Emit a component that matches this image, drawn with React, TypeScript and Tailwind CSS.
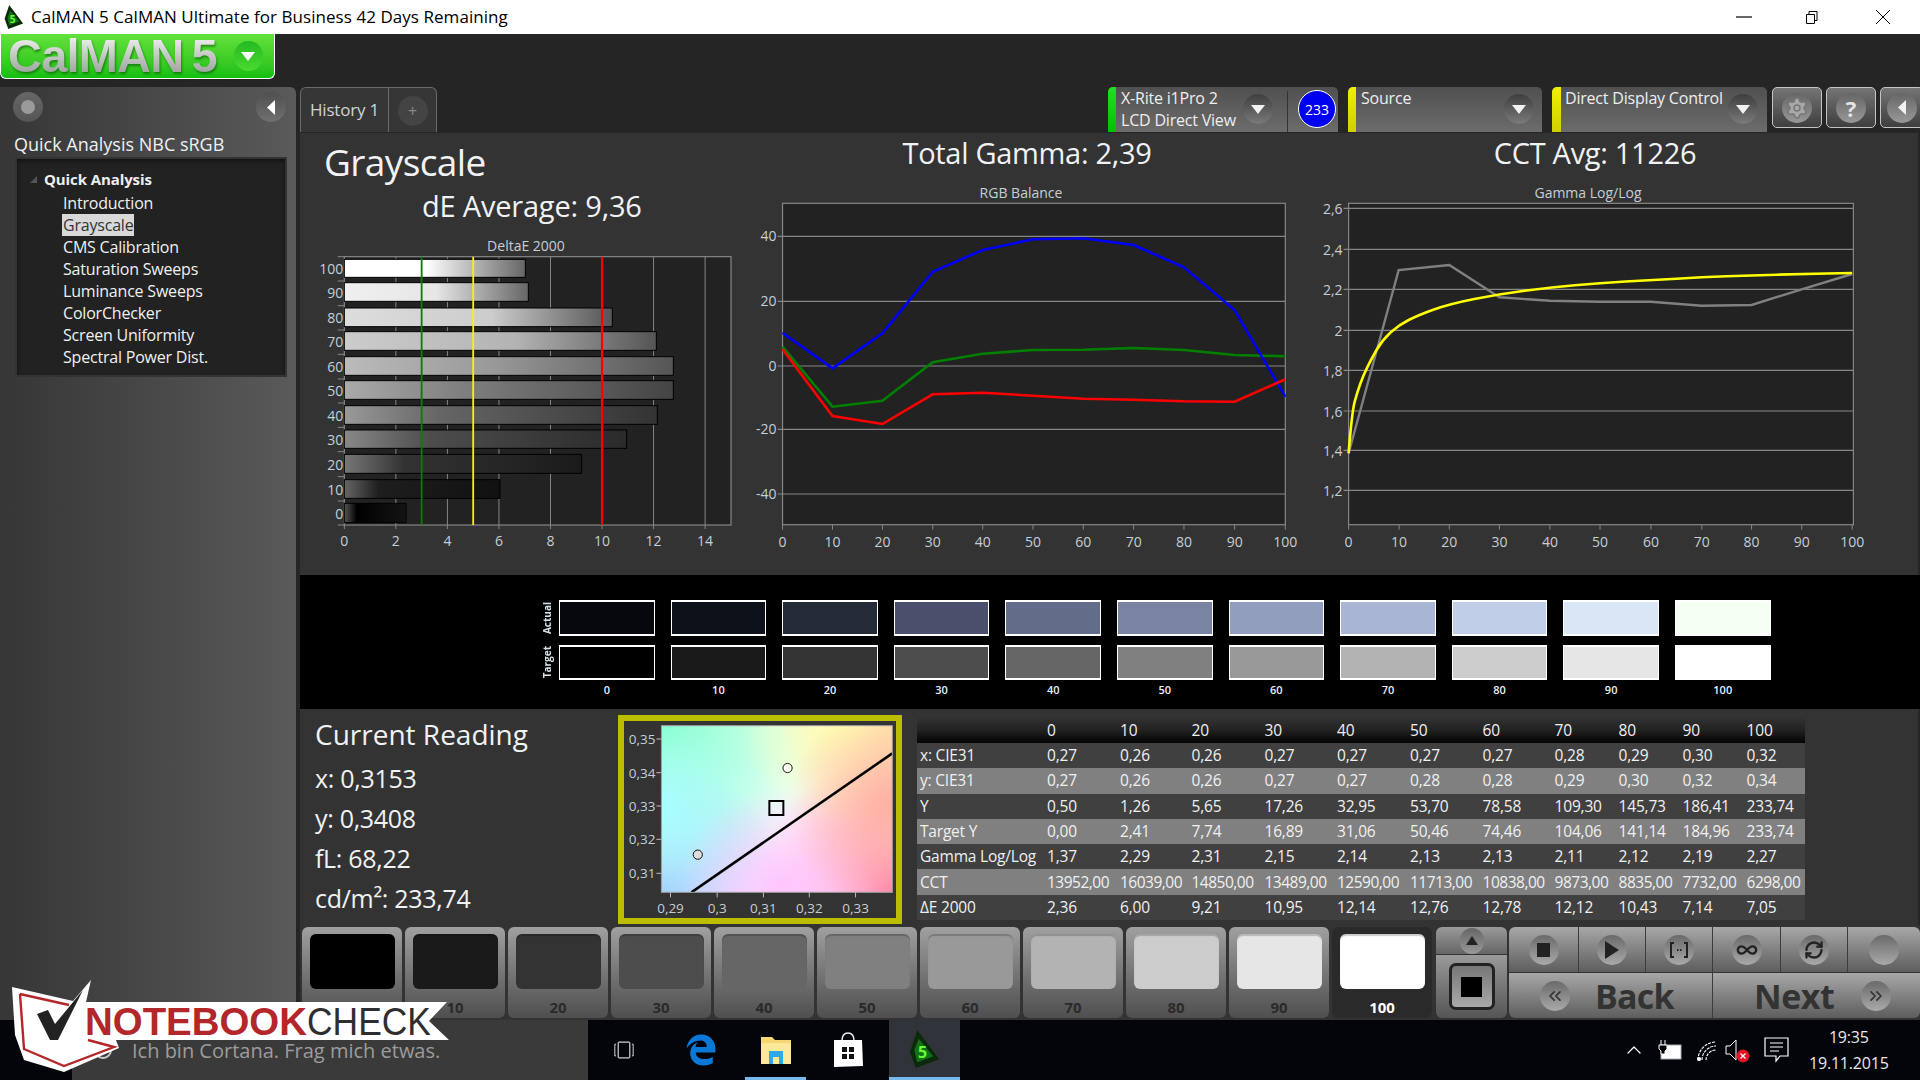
import React from "react";
import { Settings, Infinity as InfinityIcon, RefreshCw, ChevronsLeft, ChevronsRight, ChevronUp } from "lucide-react";
import { FaEdgeLegacy } from "react-icons/fa6";

const tree = ["Introduction", "Grayscale", "CMS Calibration", "Saturation Sweeps", "Luminance Sweeps", "ColorChecker", "Screen Uniformity", "Spectral Power Dist."];
const actual = ["#06080e", "#0d111a", "#232a38", "#4a4f6b", "#636c88", "#7a83a1", "#919ebd", "#a9b6d3", "#c0cde6", "#dae6f5", "#f5fff3"];
const target = ["#000000", "#1a1a1a", "#333333", "#4d4d4d", "#666666", "#808080", "#999999", "#b3b3b3", "#cccccc", "#e6e6e6", "#ffffff"];
const levels = ["0", "10", "20", "30", "40", "50", "60", "70", "80", "90", "100"];

const rows: [string, string[]][] = [
  ["x: CIE31", ["0,27", "0,26", "0,26", "0,27", "0,27", "0,27", "0,27", "0,28", "0,29", "0,30", "0,32"]],
  ["y: CIE31", ["0,27", "0,26", "0,26", "0,27", "0,27", "0,28", "0,28", "0,29", "0,30", "0,32", "0,34"]],
  ["Y", ["0,50", "1,26", "5,65", "17,26", "32,95", "53,70", "78,58", "109,30", "145,73", "186,41", "233,74"]],
  ["Target Y", ["0,00", "2,41", "7,74", "16,89", "31,06", "50,46", "74,46", "104,06", "141,14", "184,96", "233,74"]],
  ["Gamma Log/Log", ["1,37", "2,29", "2,31", "2,15", "2,14", "2,13", "2,13", "2,11", "2,12", "2,19", "2,27"]],
  ["CCT", ["13952,00", "16039,00", "14850,00", "13489,00", "12590,00", "11713,00", "10838,00", "9873,00", "8835,00", "7732,00", "6298,00"]],
  ["ΔE 2000", ["2,36", "6,00", "9,21", "10,95", "12,14", "12,76", "12,78", "12,12", "10,43", "7,14", "7,05"]],
];

const LABEL = "#c6ced6";
const GRID = "#868686";

function DeltaChart() {
  const zx = (X: number) => 300 + X / 3;
  const zy = (Y: number) => 230 + Y / 3;
  const L = zx(133), R = zx(1293), T = zy(80), B = zy(885);
  const unit = 25.77;
  const bars: [string, number, number, number, string, string, string, number][] = [
    ["100", 88, 142, 676, "#ffffff", "#ffffff", "#666666", 0.45],
    ["90", 158, 214, 685, "#f0f0f0", "#e6e6e6", "#666666", 0.5],
    ["80", 234, 290, 937, "#dddddd", "#cccccc", "#555555", 0.55],
    ["70", 305, 361, 1069, "#cccccc", "#b3b3b3", "#555555", 0.55],
    ["60", 380, 436, 1120, "#bbbbbb", "#999999", "#555555", 0.45],
    ["50", 452, 508, 1120, "#aaaaaa", "#808080", "#444444", 0.35],
    ["40", 527, 583, 1072, "#999999", "#666666", "#333333", 0.3],
    ["30", 600, 655, 980, "#888888", "#4d4d4d", "#2a2a2a", 0.3],
    ["20", 673, 730, 845, "#777777", "#333333", "#1a1a1a", 0.25],
    ["10", 749, 805, 600, "#666666", "#1e1e1e", "#111111", 0.22],
    ["0", 820, 878, 318, "#555555", "#000000", "#141414", 0.2],
  ];
  const ticks = [80, 153, 227, 300, 373, 447, 519, 592, 665, 740, 813, 885];
  return (
    <svg width={445} height={325} viewBox="300 250 445 325" className="block">
      <defs>
        {bars.map((b) => (
          <linearGradient key={b[0]} id={`bar${b[0]}`} x1="0" x2="1" y1="0" y2="0">
            <stop offset="0" stopColor={b[4]} />
            <stop offset={b[7]} stopColor={b[5]} />
            <stop offset="1" stopColor={b[6]} />
          </linearGradient>
        ))}
      </defs>
      <rect x={L} y={T} width={R - L} height={B - T} fill="#222222" stroke={GRID} strokeWidth="1.2" />
      {[2, 4, 6, 8, 10, 12, 14].map((v) => (
        <line key={v} x1={L + v * unit} x2={L + v * unit} y1={T} y2={B} stroke={GRID} />
      ))}
      {ticks.map((t) => (
        <line key={t} x1={zx(113)} x2={L} y1={zy(t)} y2={zy(t)} stroke={GRID} />
      ))}
      {bars.map((b) => (
        <rect key={b[0]} x={L} y={zy(b[1])} width={zx(b[3]) - L} height={(b[2] - b[1]) / 3} fill={`url(#bar${b[0]})`} stroke="#000" strokeWidth="1" />
      ))}
      <line x1={L + 3 * unit} x2={L + 3 * unit} y1={T} y2={B} stroke="#0c7a0c" strokeWidth="1.8" />
      <line x1={L + 5 * unit} x2={L + 5 * unit} y1={T} y2={B} stroke="#f5f500" strokeWidth="1.8" />
      <line x1={L + 10 * unit} x2={L + 10 * unit} y1={T} y2={B} stroke="#ff0000" strokeWidth="2.2" />
      {bars.map((b) => (
        <text key={b[0]} x={L - 1} y={zy((b[1] + b[2]) / 2) + 6} textAnchor="end" fontSize="14" fill={LABEL}>{b[0]}</text>
      ))}
      {[0, 2, 4, 6, 8, 10, 12, 14].map((v) => (
        <g key={v}>
          <line x1={L + v * unit} x2={L + v * unit} y1={B} y2={B + 4} stroke={GRID} />
          <text x={L + v * unit} y={B + 21} textAnchor="middle" fontSize="14" fill={LABEL}>{v}</text>
        </g>
      ))}
    </svg>
  );
}

function RgbChart() {
  const zx = (X: number) => 740 + X / 2.703;
  const zy = (Y: number) => 170 + Y / 3;
  const L = zx(115), R = zx(1474), T = zy(100), B = zy(1064);
  const xs = [115, 250, 385, 521, 656, 792, 928, 1064, 1200, 1337, 1474];
  const path = (ys: number[]) => ys.map((y, i) => `${zx(xs[i]).toFixed(1)},${zy(y).toFixed(1)}`).join(" ");
  const yLabels: [string, number][] = [["40", 199], ["20", 394], ["0", 588], ["-20", 778], ["-40", 972]];
  return (
    <svg width={555} height={375} viewBox="745 200 555 375" className="block">
      <rect x={L} y={T} width={R - L} height={B - T} fill="#222222" stroke={GRID} strokeWidth="1.2" />
      {yLabels.map(([l, y]) => (
        <g key={l}>
          <line x1={L - 5} x2={R} y1={zy(y)} y2={zy(y)} stroke={GRID} strokeWidth="1.1" />
          <text x={L - 6} y={zy(y) + 5} textAnchor="end" fontSize="14" fill={LABEL}>{l}</text>
        </g>
      ))}
      {xs.map((x, i) => (
        <g key={x}>
          <line x1={zx(x)} x2={zx(x)} y1={B} y2={B + 5} stroke={GRID} />
          <text x={zx(x)} y={B + 22} textAnchor="middle" fontSize="14" fill={LABEL}>{i * 10}</text>
        </g>
      ))}
      <polyline fill="none" stroke="#008000" strokeWidth="2.6" points={path([530, 710, 692, 577, 551, 540, 539, 534, 540, 555, 559])} />
      <polyline fill="none" stroke="#0000ff" strokeWidth="2.6" points={path([488, 595, 490, 305, 240, 208, 205, 225, 292, 420, 680])} />
      <polyline fill="none" stroke="#ff0000" strokeWidth="2.6" points={path([538, 738, 762, 673, 668, 677, 686, 689, 694, 695, 628])} />
    </svg>
  );
}

function GammaChart() {
  const zx = (X: number) => 1300 + X / 2.613;
  const zy = (Y: number) => 170 + Y / 3;
  const L = zx(127), R = zx(1446), T = zy(100), B = zy(1064);
  const xs = [127, 259, 390, 521, 653, 784, 917, 1050, 1180, 1311, 1443];
  const yl: [string, number][] = [["2,6", 115], ["2,4", 238], ["2,2", 358], ["2", 481], ["1,8", 601], ["1,6", 723], ["1,4", 841], ["1,2", 961]];
  const pts = (a: number[][]) => a.map(([x, y]) => `${zx(x).toFixed(1)},${zy(y).toFixed(1)}`).join(" ");
  const yellow = [[127, 850], [136, 725], [150, 665], [165, 617], [185, 570], [215, 510], [258, 465], [310, 435], [390, 402], [521, 372], [653, 352], [784, 339], [917, 330], [1050, 322], [1180, 316], [1311, 312], [1443, 309]];
  const smooth = yellow.reduce((d, [x, y], i) => {
    if (i === 0) return `M${zx(x).toFixed(1)} ${zy(y).toFixed(1)}`;
    if (i === yellow.length - 1) return `${d} L${zx(x).toFixed(1)} ${zy(y).toFixed(1)}`;
    const mx = (x + yellow[i + 1][0]) / 2;
    const my = (y + yellow[i + 1][1]) / 2;
    return `${d} Q${zx(x).toFixed(1)} ${zy(y).toFixed(1)} ${zx(mx).toFixed(1)} ${zy(my).toFixed(1)}`;
  }, "");
  return (
    <svg width={618} height={375} viewBox="1300 200 618 375" className="block">
      <rect x={L} y={T} width={R - L} height={B - T} fill="#222222" stroke={GRID} strokeWidth="1.2" />
      {yl.map(([l, y]) => (
        <g key={l}>
          <line x1={L - 5} x2={R} y1={zy(y)} y2={zy(y)} stroke={GRID} strokeWidth="1.1" />
          <text x={L - 6} y={zy(y) + 6} textAnchor="end" fontSize="14" fill={LABEL}>{l}</text>
        </g>
      ))}
      {xs.map((x, i) => (
        <g key={x}>
          <line x1={zx(x)} x2={zx(x)} y1={B} y2={B + 5} stroke={GRID} />
          <text x={zx(x)} y={B + 22} textAnchor="middle" fontSize="14" fill={LABEL}>{i * 10}</text>
        </g>
      ))}
      <polyline fill="none" stroke="#808080" strokeWidth="2.4" points={pts([[127, 850], [258, 300], [390, 285], [521, 382], [653, 392], [784, 395], [917, 395], [1050, 407], [1180, 405], [1311, 358], [1443, 312]])} />
      <path fill="none" stroke="#ffff00" strokeWidth="2.6" d={smooth} />
    </svg>
  );
}

function CieChart() {
  const zx = (X: number) => 300 + X / 2.529;
  const zy = (Y: number) => 705 + Y / 3;
  const L = zx(914), R = zx(1498), T = zy(62), B = zy(562);
  const blobs: [string, number, number, string, number][] = [
    ["a", L, T, "#7dffc0", 175],
    ["b", R, T, "#ffd4a4", 110],
    ["c", L, B, "#a0c0ff", 130],
    ["d", R, B, "#ff80ac", 135],
    ["e", L, (T + B) / 2, "#a8ffff", 115],
    ["f", zx(1370), T, "#ffffb0", 100],
    ["g", zx(1220), B, "#ffc4ff", 105],
    ["h", R, zy(300), "#ffb0a0", 105],
  ];
  return (
    <svg width={272} height={197} viewBox="624 721 272 197" className="block">
      <defs>
        <clipPath id="cieclip"><rect x={L} y={T} width={R - L} height={B - T} /></clipPath>
        {blobs.map(([id, x, y, c, r]) => (
          <radialGradient key={id} id={`cie${id}`} gradientUnits="userSpaceOnUse" cx={x} cy={y} r={r}>
            <stop offset="0" stopColor={c} stopOpacity="1" />
            <stop offset="1" stopColor={c} stopOpacity="0" />
          </radialGradient>
        ))}
      </defs>
      <rect x={L} y={T} width={R - L} height={B - T} fill="#ffffff" />
      <g clipPath="url(#cieclip)">
        {blobs.map(([id]) => (
          <rect key={id} x={L} y={T} width={R - L} height={B - T} fill={`url(#cie${id})`} />
        ))}
        <line x1={zx(990)} y1={zy(562)} x2={zx(1498)} y2={zy(145)} stroke="#000" strokeWidth="2.6" />
      </g>
      <rect x={L} y={T} width={R - L} height={B - T} fill="none" stroke="#999" strokeWidth="1" />
      <circle cx={zx(1233)} cy={zy(189)} r="4.6" fill="#fffff0" stroke="#111" strokeWidth="1" />
      <circle cx={zx(1006)} cy={zy(449)} r="4.6" fill="#ddd" stroke="#111" strokeWidth="1" />
      <rect x={zx(1187)} y={zy(288)} width="14" height="14" fill="none" stroke="#000" strokeWidth="2" />
      {([["0,35", 102], ["0,34", 203], ["0,33", 303], ["0,32", 403], ["0,31", 505]] as [string, number][]).map(([l, y]) => (
        <g key={l}>
          <line x1={L - 5} x2={L} y1={zy(y)} y2={zy(y)} stroke="#bbb" />
          <text x={L - 6} y={zy(y) + 5} textAnchor="end" fontSize="13.5" fill={LABEL}>{l}</text>
        </g>
      ))}
      {([["0,29", 937], ["0,3", 1055], ["0,31", 1172], ["0,32", 1288], ["0,33", 1405]] as [string, number][]).map(([l, x]) => (
        <g key={l}>
          <line x1={zx(x)} x2={zx(x)} y1={B} y2={B + 5} stroke="#bbb" />
          <text x={zx(x)} y={B + 21} textAnchor="middle" fontSize="13.5" fill={LABEL}>{l}</text>
        </g>
      ))}
    </svg>
  );
}

function DropCircle() {
  return (
    <div className="w-[30px] h-[30px] rounded-full bg-gradient-to-b from-[#3f3f3f] to-[#7a7a7a] flex items-center justify-center shrink-0">
      <svg width="14" height="9" viewBox="0 0 14 9"><path d="M0 0h14L7 9z" fill="#f2f2f2" /></svg>
    </div>
  );
}

function TopButton({ children, w = "w-[50px]" }: { children: React.ReactNode; w?: string }) {
  return (
    <div className={`${w} h-[41px] rounded-[5px] border border-[#c4c4c4] bg-gradient-to-b from-[#757575] to-[#3f3f3f] flex items-center justify-center shrink-0`}>
      <div className="w-[30px] h-[30px] rounded-full bg-gradient-to-b from-[#666] to-[#999] flex items-center justify-center shrink-0">{children}</div>
    </div>
  );
}

function TransportCell({ children, w }: { children?: React.ReactNode; w: string }) {
  return (
    <div className={`${w} h-full border-r border-[#3c3c3c] flex items-center justify-center shrink-0`}>
      <div className="w-[30px] h-[30px] rounded-full bg-gradient-to-b from-[#6a6a6a] to-[#aaaaaa] flex items-center justify-center">{children}</div>
    </div>
  );
}

function CalmanIcon({ size }: { size: number }) {
  return (
    <svg width={size * 0.82} height={size} viewBox="0 0 20 26">
      <path d="M5 0 L20 20 L4 26 L0 15 Z" fill="#0a2a0a" />
      <path d="M6 6 L16 18 L5 22 L3 14 Z" fill="#12701a" />
      <text x="5.5" y="19" fontSize="11" fontWeight="700" fill="#66ff33">5</text>
    </svg>
  );
}

function Overlay() {
  return (
    <svg width={450} height={100} viewBox="5 978 450 100" className="absolute left-[5px] top-[978px]">
      <path d="M12 987 L73 1001 L91 980 L86 1002 L447 1002 L429 1021 L449 1040 L116 1040 L119 1048 L64 1072 L24 1060 L15 1035 Z" fill="#ffffff" />
      <path d="M20 994 L69 1005 M20 994 L24 1049 L64 1066 L114 1047 L88 1040" fill="none" stroke="#b3262a" strokeWidth="2.4" />
      <path d="M37 1014 L48 1010 L55 1024 L83 990 L58 1040 L50 1040 Z" fill="#222222" />
      <text x="85" y="1035" fontFamily="'Liberation Sans', sans-serif" fontWeight="700" fontSize="38" fill="#b3262a" textLength="222" lengthAdjust="spacingAndGlyphs">NOTEBOOK</text>
      <text x="307" y="1035" fontFamily="'Liberation Sans', sans-serif" fontSize="38" fill="#2e2e2e" textLength="124" lengthAdjust="spacingAndGlyphs">CHECK</text>
    </svg>
  );
}

export default function App() {
  const colTemplate = "grid grid-cols-[130px_73px_71.5px_73px_72.5px_73px_72.6px_72px_64px_64px_64px_59.5px]";
  return (
    <div className="relative w-[1920px] h-[1080px] overflow-hidden flex flex-col bg-[#252525] font-['Open_Sans',sans-serif] text-white">
      {/* title bar */}
      <div className="h-[34px] bg-white flex items-center text-black shrink-0">
        <div className="ml-[4px] w-[27px] flex"><CalmanIcon size={24} /></div>
        <span className="text-[17px] tracking-[0.05px]">CalMAN 5 CalMAN Ultimate for Business 42 Days Remaining</span>
        <div className="ml-auto flex items-center">
          <svg width="16" height="16" viewBox="0 0 16 16" className="mr-[52px]"><path d="M0 8h16" stroke="#000" strokeWidth="1.2" /></svg>
          <svg width="16" height="16" viewBox="0 0 16 16" className="mr-[55px]"><path d="M2.5 5.5h8v9h-8zM5 5.5V2.5h8v9h-2.5" fill="none" stroke="#000" /></svg>
          <svg width="16" height="16" viewBox="0 0 16 16" className="mr-[29px]"><path d="M1 1l14 14M15 1L1 15" stroke="#000" /></svg>
        </div>
      </div>

      {/* logo strip */}
      <div className="h-[53px] shrink-0">
        <div className="w-[275px] h-[45px] rounded-b-[6px] border border-t-0 border-white bg-gradient-to-b from-[#62e23c] to-[#10bf10] flex items-center">
          <span className="ml-[7px] font-['Liberation_Sans',sans-serif] font-bold text-[47px] leading-[44px] tracking-[-0.8px] bg-gradient-to-b from-[#f6f6f6] to-[#939b93] bg-clip-text text-transparent drop-shadow-[1px_2px_1px_rgba(0,60,0,0.5)]">CalMAN</span>
          <span className="ml-[8px] font-['Liberation_Sans',sans-serif] font-bold text-[47px] leading-[44px] bg-gradient-to-b from-[#f6f6f6] to-[#939b93] bg-clip-text text-transparent drop-shadow-[1px_2px_1px_rgba(0,60,0,0.5)]">5</span>
          <div className="ml-[16px] w-[29px] h-[30px] rounded-full bg-gradient-to-b from-[#22b922] to-[#4ada30] flex items-center justify-center shrink-0">
            <svg width="14" height="9" viewBox="0 0 14 9"><path d="M0 0h14L7 9z" fill="#fff" /></svg>
          </div>
        </div>
      </div>

      <div className="flex h-[933px] shrink-0">
        {/* left panel */}
        <div className="w-[296px] mr-[4px] rounded-tr-[6px] bg-gradient-to-r from-[#363636] to-[#5a5a5a] shrink-0">
          <div className="flex justify-between items-center h-[40px] pl-[13px] pr-[10px]">
            <div className="w-[30px] h-[30px] rounded-full bg-gradient-to-b from-[#666] to-[#555] flex items-center justify-center">
              <div className="w-[14px] h-[14px] rounded-full bg-[#9a9a9a]" />
            </div>
            <div className="w-[30px] h-[30px] rounded-full bg-gradient-to-b from-[#505050] to-[#707070] flex items-center justify-center">
              <svg width="8" height="15" viewBox="0 0 8 15"><path d="M8 0v15L0 7.5z" fill="#fff" /></svg>
            </div>
          </div>
          <div className="pl-[14px] mt-[4px] text-[18px] leading-[26px] text-[#eef0f2]">Quick Analysis NBC sRGB</div>
          <div className="ml-[15px] w-[272px] h-[220px] bg-[#222222] border-2 border-[#333] pt-[8px] shadow-[inset_0_2px_4px_#111]">
            <div className="flex items-center h-[25px] pl-[13px]">
              <svg width="7" height="7" viewBox="0 0 7 7"><path d="M7 0v7H0z" fill="#555" /></svg>
              <span className="ml-[7px] text-[15px] font-bold text-[#eeeeee] tracking-[-0.1px]">Quick Analysis</span>
            </div>
            <div className="pl-[45px] text-[16px] leading-[22px] text-[#f0f0f0] tracking-[-0.2px]">
              {tree.map((t) => (
                <div key={t} className="h-[22px]">
                  <span className={t === "Grayscale" ? "inline-block bg-[#d9d9d9] text-[#333] h-[22px] px-[1px]" : "inline-block px-[1px]"}>{t}</span>
                </div>
              ))}
            </div>
          </div>
        </div>

        {/* main column */}
        <div className="w-[1620px] flex flex-col">
          {/* tabs row */}
          <div className="h-[46px] flex shrink-0">
            <div className="w-[137px] h-[45px] rounded-t-[6px] border border-b-0 border-[#6a6a6a] bg-[#363636] flex shrink-0">
              <div className="w-[88px] border-r border-[#6a6a6a] flex items-center justify-center text-[17px] text-[#cfd3d6] tracking-[-0.2px]">History 1</div>
              <div className="flex-1 flex items-center justify-center pt-[2px]">
                <div className="w-[30px] h-[30px] rounded-full bg-[#444] flex items-center justify-center text-[#888] text-[16px] leading-none">+</div>
              </div>
            </div>
            <div className="ml-[671px] w-[230px] h-[45px] rounded-t-[5px] bg-gradient-to-b from-[#505050] to-[#6c6c6c] flex shrink-0">
              <div className="w-[8px] bg-gradient-to-b from-[#20e020] to-[#00c000] rounded-tl-[5px]" />
              <div className="ml-[5px] w-[116px] text-[16px] leading-[22px] text-[#eee] tracking-[-0.2px] whitespace-nowrap">X-Rite i1Pro 2<br />LCD Direct View</div>
              <div className="pt-[7px] ml-[6px]"><DropCircle /></div>
              <div className="ml-[14px] w-px bg-[#333] mt-[4px]" />
              <div className="ml-[10px] mt-[3px] w-[38px] h-[38px] rounded-full bg-[#0000f0] border border-white flex items-center justify-center text-[14px] text-white">233</div>
            </div>
            <div className="ml-[10px] w-[194px] h-[45px] rounded-t-[5px] bg-gradient-to-b from-[#505050] to-[#6c6c6c] flex shrink-0">
              <div className="w-[8px] bg-gradient-to-b from-[#f0f000] to-[#d0d000] rounded-tl-[5px]" />
              <div className="ml-[5px] flex-1 text-[16px] leading-[22px] text-[#eee] tracking-[-0.2px]">Source</div>
              <div className="pt-[7px] mr-[8px]"><DropCircle /></div>
            </div>
            <div className="ml-[10px] w-[215px] h-[45px] rounded-t-[5px] bg-gradient-to-b from-[#505050] to-[#6c6c6c] flex shrink-0">
              <div className="w-[9px] bg-gradient-to-b from-[#f0f000] to-[#d0d000] rounded-tl-[5px]" />
              <div className="ml-[4px] flex-1 text-[16px] leading-[22px] text-[#eee] tracking-[-0.2px] whitespace-nowrap">Direct Display Control</div>
              <div className="pt-[7px] mr-[9px]"><DropCircle /></div>
            </div>
            <div className="ml-[5px] flex gap-[4px] shrink-0">
              <TopButton><Settings size={24} color="#a8a8a8" fill="#a8a8a8" stroke="#777" strokeWidth={1.5} /></TopButton>
              <TopButton><span className="text-[22px] font-bold text-[#e4e4e4] leading-none">?</span></TopButton>
              <TopButton w="w-[44px]"><svg width="8" height="15" viewBox="0 0 8 15"><path d="M8 0v15L0 7.5z" fill="#f2f2f2" /></svg></TopButton>
            </div>
          </div>

          {/* graphs */}
          <div className="h-[442px] w-[1618px] bg-[#333333] flex shrink-0">
            <div className="w-[445px] shrink-0">
              <div className="h-[56px] pl-[24px] flex items-center text-[37px] leading-none text-[#f0f2f4] tracking-[-0.6px]">Grayscale</div>
              <div className="h-[32px] pl-[122px] flex items-center text-[29px] leading-none text-[#f0f2f4] tracking-[-0.2px] whitespace-nowrap">dE Average: 9,36</div>
              <div className="h-[29px] pt-[16px] w-[452px] text-center text-[14px] leading-[17px] text-[#c6ced6] whitespace-nowrap">DeltaE 2000</div>
              <DeltaChart />
            </div>
            <div className="w-[555px] shrink-0">
              <div className="h-[40px] pl-[9px] text-center text-[29px] leading-[40px] text-[#f0f2f4] tracking-[-0.3px]">Total Gamma: 2,39</div>
              <div className="h-[27px] pt-[11px] text-center text-[14px] leading-[17px] text-[#c6ced6] -ml-[3px]">RGB Balance</div>
              <RgbChart />
            </div>
            <div className="w-[618px] shrink-0">
              <div className="h-[40px] text-center text-[29px] leading-[40px] text-[#f0f2f4] tracking-[-0.3px] -ml-[28px]">CCT Avg: 11226</div>
              <div className="h-[27px] pt-[11px] text-center text-[14px] leading-[17px] text-[#c6ced6] -ml-[42px]">Gamma Log/Log</div>
              <GammaChart />
            </div>
          </div>

          {/* swatches */}
          <div className="h-[134px] bg-black shrink-0 flex">
            <div className="w-[259px] flex flex-col shrink-0 items-end pr-[7px] pt-[25px] text-[10px] font-bold leading-none text-[#d8e0e8]">
              <div className="h-[36px] flex items-center"><span className="[writing-mode:vertical-rl] rotate-180">Actual</span></div>
              <div className="h-[9px]" />
              <div className="h-[35px] flex items-center"><span className="[writing-mode:vertical-rl] rotate-180">Target</span></div>
            </div>
            <div className="flex gap-[16px] pt-[25px]">
              {levels.map((l, i) => (
                <div key={l} className="w-[95.6px] flex flex-col">
                  <div className="h-[36px] border border-white border-t-2 border-b-2" style={{ background: actual[i] }} />
                  <div className="h-[9px]" />
                  <div className="h-[35px] border border-white border-t-2 border-b-2" style={{ background: target[i] }} />
                  <div className="text-center text-[11px] font-semibold leading-[20px] text-[#e8f0f8]">{l}</div>
                </div>
              ))}
            </div>
          </div>

          {/* reading + table */}
          <div className="h-[216px] bg-[#333333] w-[1618px] flex shrink-0">
            <div className="w-[318px] pl-[15px] shrink-0 text-[#f0f2f4]">
              <div className="h-[48px] mt-[1px] flex items-center text-[28px] leading-none whitespace-nowrap">Current Reading</div>
              <div className="text-[25px] leading-[40px] tracking-[-0.3px]">
                <div>x: 0,3153</div>
                <div>y: 0,3408</div>
                <div>fL: 68,22</div>
                <div>cd/m²: 233,74</div>
              </div>
            </div>
            <div className="mt-[6px] w-[284px] h-[209px] border-[6px] border-[#bdbd00] bg-[#333] shrink-0">
              <CieChart />
            </div>
            <div className="ml-[15px] mt-[8px] w-[888px] text-[15.5px] text-[#f0f0f0] shrink-0 tracking-[-0.2px]">
              <div className={`${colTemplate} h-[26px] pt-[2px] items-center bg-gradient-to-b from-[#333] via-[#222] to-[#050505]`}>
                <div />
                {levels.map((l) => <div key={l}>{l}</div>)}
              </div>
              {rows.map(([name, vals], ri) => (
                <div key={name} className={`${colTemplate} h-[25.3px] items-center whitespace-nowrap ${ri % 2 === 0 ? "bg-[#404040]" : "bg-[#808080]"}`}>
                  <div className="pl-[3px]">{name}</div>
                  {vals.map((v, i) => <div key={i} className={name === "CCT" ? "tracking-[-0.5px]" : ""}>{v}</div>)}
                </div>
              ))}
            </div>
          </div>

          {/* bottom buttons */}
          <div className="h-[95px] bg-[#333333] pl-[2px] pt-[2px] flex shrink-0">
            <div className="flex gap-[3px]">
              {levels.map((l, i) => {
                const on = l === "100";
                return (
                  <div key={l} className={`w-[100px] h-[91px] rounded-[6px] flex flex-col items-center pt-[7px] ${on ? "bg-[#2a2a2a]" : "bg-gradient-to-b from-[#a0a0a0] to-[#4f4f4f]"}`}>
                    <div className="w-[85px] h-[55px] rounded-[6px] shadow-[inset_0_2px_1px_rgba(0,0,0,0.2)]" style={{ background: target[i] }} />
                    <div className={`mt-[8px] text-[15px] font-bold leading-[20px] ${on ? "text-white" : "text-[#2a2a2a]"}`}>{l}</div>
                  </div>
                );
              })}
            </div>
            <div className="ml-[4px] w-[71px] h-[91px] flex flex-col gap-[1px] shrink-0">
              <div className="h-[27px] rounded-t-[6px] bg-gradient-to-b from-[#9a9a9a] to-[#666] flex items-center justify-center">
                <div className="w-[24px] h-[26px] rounded-full bg-gradient-to-b from-[#666] to-[#999] flex items-center justify-center">
                  <svg width="12" height="9" viewBox="0 0 12 9"><path d="M6 0l6 9H0z" fill="#222" /></svg>
                </div>
              </div>
              <div className="h-[63px] rounded-b-[6px] bg-gradient-to-b from-[#9a9a9a] to-[#555] flex items-center justify-center">
                <div className="w-[46px] h-[47px] rounded-[7px] border-[3px] border-[#222] bg-gradient-to-b from-[#777] to-[#aaa] flex items-center justify-center">
                  <div className="w-[21px] h-[20px] bg-black" />
                </div>
              </div>
            </div>
            <div className="ml-[2px] flex-1 h-[91px] flex flex-col gap-[1px]">
              <div className="h-[45px] rounded-t-[6px] bg-gradient-to-b from-[#a8a8a8] to-[#5e5e5e] flex overflow-hidden">
                <TransportCell w="w-[70px]"><div className="w-[13px] h-[14px] bg-[#222]" /></TransportCell>
                <TransportCell w="w-[67px]"><svg width="14" height="18" viewBox="0 0 14 18"><path d="M0 0l14 9L0 18z" fill="#222" /></svg></TransportCell>
                <TransportCell w="w-[67px]"><svg width="18" height="16" viewBox="0 0 18 16"><path d="M4 1H1v14h3M14 1h3v14h-3" fill="none" stroke="#222" strokeWidth="2" /><path d="M7 8h1.5M10 8h1.5" stroke="#222" strokeWidth="2" /></svg></TransportCell>
                <TransportCell w="w-[68px]"><InfinityIcon size={22} color="#222" strokeWidth={2.6} /></TransportCell>
                <TransportCell w="w-[67px]"><RefreshCw size={20} color="#222" strokeWidth={2.8} /></TransportCell>
                <div className="flex-1 flex items-center justify-center"><div className="w-[30px] h-[30px] rounded-full bg-gradient-to-b from-[#6a6a6a] to-[#aaaaaa]" /></div>
              </div>
              <div className="h-[45px] rounded-b-[6px] bg-gradient-to-b from-[#a8a8a8] to-[#5e5e5e] flex text-[34px] font-bold leading-none text-[#333]">
                <div className="w-[204px] border-r border-[#3c3c3c] flex items-center pl-[31px]">
                  <div className="w-[30px] h-[30px] rounded-full bg-gradient-to-b from-[#6a6a6a] to-[#aaaaaa] flex items-center justify-center"><ChevronsLeft size={20} color="#333" /></div>
                  <span className="ml-[25px] tracking-[-0.8px]">Back</span>
                </div>
                <div className="flex-1 flex items-center pl-[41px]">
                  <span className="tracking-[-0.5px]">Next</span>
                  <div className="ml-[27px] w-[30px] h-[30px] rounded-full bg-gradient-to-b from-[#6a6a6a] to-[#aaaaaa] flex items-center justify-center"><ChevronsRight size={20} color="#333" /></div>
                </div>
              </div>
            </div>
          </div>
        </div>
      </div>

      {/* taskbar */}
      <div className="h-[60px] flex bg-[#03050a] shrink-0">
        <div className="w-[72px] shrink-0" />
        <div className="w-[516px] bg-[#3a3a3a] flex items-center shrink-0">
          <div className="ml-[22px] w-[18px] h-[18px] rounded-full border-2 border-[#ccc]" />
          <span className="ml-[20px] mt-[1px] text-[20px] text-[#9c9c9c] whitespace-nowrap">Ich bin Cortana. Frag mich etwas.</span>
        </div>
        <div className="w-[26px] shrink-0" />
        <div className="w-[20px] flex items-center shrink-0">
          <svg width="24" height="20" viewBox="0 0 24 20"><rect x="5" y="0.5" width="14" height="19" rx="1" fill="none" stroke="#fff" strokeWidth="1.2" /><path d="M2.5 3H1v14h1.5M21.5 3H23v14h-1.5" fill="none" stroke="#fff" /></svg>
        </div>
        <div className="ml-[38px] w-[58px] flex items-center justify-center shrink-0"><FaEdgeLegacy size={32} color="#0a78d7" /></div>
        <div className="ml-[15px] w-[61px] h-full flex items-center justify-center border-b-[3px] border-[#76b9ed] shrink-0">
          <svg width="32" height="30" viewBox="0 0 32 30">
            <path d="M1 3h11l3 3h16v24H1z" fill="#f7d774" />
            <path d="M1 9h30v21H1z" fill="#fbe89a" />
            <rect x="9" y="17" width="14" height="13" fill="#2ea8e6" />
            <rect x="13" y="23" width="6" height="7" fill="#fbe89a" />
          </svg>
        </div>
        <div className="w-[83px] h-full flex items-center justify-center shrink-0">
          <svg width="32" height="36" viewBox="0 0 32 36">
            <path d="M10 9C10 2 14 1 16 1s6 1 6 8" fill="none" stroke="#eee" strokeWidth="1.5" />
            <path d="M2 8h28l1 26-29 1z" fill="#fff" />
            <path d="M10 15h5v5h-5zM17 15h5v5h-5zM10 22h5v5h-5zM17 22h5v5h-5z" fill="#111" />
          </svg>
        </div>
        <div className="w-[71px] h-full bg-[#30343a] flex items-center justify-center border-b-[3px] border-[#76b9ed] shrink-0"><CalmanIcon size={38} /></div>
        <div className="flex-1 flex items-center relative">
          <ChevronUp size={24} color="#fff" strokeWidth={1.2} className="ml-[662px]" />
          <svg width="26" height="24" viewBox="0 0 26 24" className="ml-[10px]"><rect x="5" y="7" width="20" height="14" fill="#fff" stroke="#aaa" /><path d="M5 2v5M9 2v5M3 7h8v4l-2 2v3H5v-3l-2-2z" fill="#000" stroke="#fff" /></svg>
          <svg width="24" height="24" viewBox="0 0 24 24" className="ml-[12px]" fill="none" stroke="#fff" strokeWidth="1.1"><path d="M4 22A18 18 0 0 1 22 4M8 22A14 14 0 0 1 22 8M12 22A10 10 0 0 1 22 12" strokeDasharray="3 1" /><circle cx="5" cy="21" r="1.5" fill="#fff" /></svg>
          <svg width="26" height="28" viewBox="0 0 26 28" className="ml-[7px]"><path d="M1 10h4l6-6v20l-6-6H1z" fill="none" stroke="#fff" /><circle cx="18" cy="20" r="6.5" fill="#e81123" /><path d="M15.5 17.5l5 5M20.5 17.5l-5 5" stroke="#fff" strokeWidth="1.2" /></svg>
          <svg width="26" height="26" viewBox="0 0 26 26" className="ml-[13px]" fill="none" stroke="#fff" strokeWidth="1.2"><path d="M1 1h23v18h-8l-4 5v-5H1z" /><path d="M6 6h13M6 10h13M6 14h9" /></svg>
          <div className="ml-[19px] flex flex-col items-center text-[16px] leading-[26px] text-[#e8e8e8] tracking-[-0.2px]">
            <span>19:35</span>
            <span>19.11.2015</span>
          </div>
        </div>
      </div>

      <Overlay />
    </div>
  );
}
